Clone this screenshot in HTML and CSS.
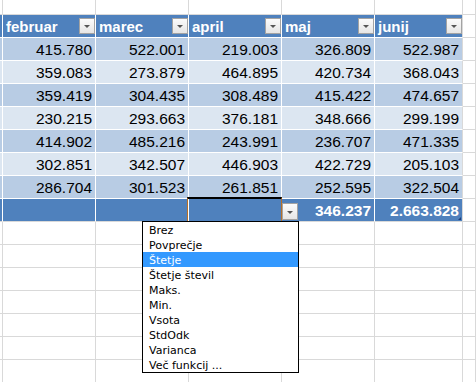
FILE: index.html
```html
<!DOCTYPE html>
<html lang="sl">
<head>
  <meta charset="UTF-8">
  <title>Tabela</title>
  <link rel="stylesheet" href="styles.css">
</head>
<body>
  <div class="sheet">
    <div class="row top">
      <div class="cell c0"></div><div class="cell c1"></div><div class="cell c2"></div><div class="cell c3"></div><div class="cell c4"></div><div class="cell c5"></div><div class="cell c6"></div>
    </div>

    <div class="row head">
      <div class="cell c0"></div>
      <div class="cell c1">februar<span class="dd"></span></div>
      <div class="cell c2">marec<span class="dd"></span></div>
      <div class="cell c3">april<span class="dd"></span></div>
      <div class="cell c4">maj<span class="dd"></span></div>
      <div class="cell c5">junij<span class="dd"></span></div>
      <div class="cell c6"></div>
    </div>

    <div class="row band dark">
      <div class="cell c0"></div><div class="cell c1">415.780</div><div class="cell c2">522.001</div><div class="cell c3">219.003</div><div class="cell c4">326.809</div><div class="cell c5">522.987</div><div class="cell c6"></div>
    </div>
    <div class="row band light">
      <div class="cell c0"></div><div class="cell c1">359.083</div><div class="cell c2">273.879</div><div class="cell c3">464.895</div><div class="cell c4">420.734</div><div class="cell c5">368.043</div><div class="cell c6"></div>
    </div>
    <div class="row band dark">
      <div class="cell c0"></div><div class="cell c1">359.419</div><div class="cell c2">304.435</div><div class="cell c3">308.489</div><div class="cell c4">415.422</div><div class="cell c5">474.657</div><div class="cell c6"></div>
    </div>
    <div class="row band light">
      <div class="cell c0"></div><div class="cell c1">230.215</div><div class="cell c2">293.663</div><div class="cell c3">376.181</div><div class="cell c4">348.666</div><div class="cell c5">299.199</div><div class="cell c6"></div>
    </div>
    <div class="row band dark">
      <div class="cell c0"></div><div class="cell c1">414.902</div><div class="cell c2">485.216</div><div class="cell c3">243.991</div><div class="cell c4">236.707</div><div class="cell c5">471.335</div><div class="cell c6"></div>
    </div>
    <div class="row band light">
      <div class="cell c0"></div><div class="cell c1">302.851</div><div class="cell c2">342.507</div><div class="cell c3">446.903</div><div class="cell c4">422.729</div><div class="cell c5">205.103</div><div class="cell c6"></div>
    </div>
    <div class="row band dark">
      <div class="cell c0"></div><div class="cell c1">286.704</div><div class="cell c2">301.523</div><div class="cell c3">261.851</div><div class="cell c4">252.595</div><div class="cell c5">322.504</div><div class="cell c6"></div>
    </div>

    <div class="row total">
      <div class="cell c0"></div>
      <div class="cell c1"></div>
      <div class="cell c2"></div>
      <div class="cell c3 active"></div>
      <div class="cell c4"><span class="dd dd-total"></span>346.237</div>
      <div class="cell c5">2.663.828<span class="grip"></span></div>
      <div class="cell c6"></div>
    </div>

    <div class="row empty"><div class="cell c0"></div><div class="cell c1"></div><div class="cell c2"></div><div class="cell c3"></div><div class="cell c4"></div><div class="cell c5"></div><div class="cell c6"></div></div>
    <div class="row empty"><div class="cell c0"></div><div class="cell c1"></div><div class="cell c2"></div><div class="cell c3"></div><div class="cell c4"></div><div class="cell c5"></div><div class="cell c6"></div></div>
    <div class="row empty"><div class="cell c0"></div><div class="cell c1"></div><div class="cell c2"></div><div class="cell c3"></div><div class="cell c4"></div><div class="cell c5"></div><div class="cell c6"></div></div>
    <div class="row empty"><div class="cell c0"></div><div class="cell c1"></div><div class="cell c2"></div><div class="cell c3"></div><div class="cell c4"></div><div class="cell c5"></div><div class="cell c6"></div></div>
    <div class="row empty"><div class="cell c0"></div><div class="cell c1"></div><div class="cell c2"></div><div class="cell c3"></div><div class="cell c4"></div><div class="cell c5"></div><div class="cell c6"></div></div>
    <div class="row empty"><div class="cell c0"></div><div class="cell c1"></div><div class="cell c2"></div><div class="cell c3"></div><div class="cell c4"></div><div class="cell c5"></div><div class="cell c6"></div></div>
    <div class="row empty"><div class="cell c0"></div><div class="cell c1"></div><div class="cell c2"></div><div class="cell c3"></div><div class="cell c4"></div><div class="cell c5"></div><div class="cell c6"></div></div>

    <!-- total row function list -->
    <ul class="func-list">
      <li>Brez</li>
      <li>Povprečje</li>
      <li class="selected">Štetje</li>
      <li>Štetje števil</li>
      <li>Maks.</li>
      <li>Min.</li>
      <li>Vsota</li>
      <li>StdOdk</li>
      <li>Varianca</li>
      <li>Več funkcij ...</li>
    </ul>
  </div>
</body>
</html>
```

FILE: styles.css
```css
body {
  margin: 0;
  background: #fff;
  overflow: hidden;
}

.sheet {
  position: relative;
  width: 476px;
  height: 382px;
  overflow: hidden;
  font-family: "Liberation Sans", Arial, sans-serif;
  font-size: 15.5px;
  color: #000;
}

.row {
  display: flex;
  height: 23px;
}

.row.top {
  height: 15px;
}

.cell {
  position: relative;
  box-sizing: border-box;
  height: 100%;
  border-right: 1px solid #d9d9d9;
  border-bottom: 1px solid #d9d9d9;
  padding: 1px 3px 0 3px;
  line-height: 22px;
  white-space: nowrap;
  overflow: hidden;
}

.c0 { width: 3px; padding: 0; }
.c1, .c2, .c3, .c4 { width: 93px; }
.c5 { width: 88px; }
.c6 { flex: 1; }

/* table area */
.head .cell,
.band .cell,
.total .cell {
  border-right-color: #fff;
  border-bottom-color: #fff;
}

.head .cell {
  background: #4f81bd;
  color: #fff;
  font-weight: bold;
  font-size: 15px;
  overflow: visible;
}

.band .cell,
.total .cell {
  text-align: right;
}

.band.dark .cell { background: #b8cce4; }
.band.light .cell { background: #dce6f1; }

.total .cell {
  background: #4f81bd;
  color: #fff;
  font-weight: bold;
  overflow: visible;
  border-bottom-color: #d9d9d9;
}

.row .cell.c5 {
  border-right-color: #d9d9d9;
}

.row .cell.c6 {
  background: #fff;
  border-right-color: #d9d9d9;
  border-bottom-color: #d9d9d9;
}

/* filter buttons */
.dd {
  position: absolute;
  right: 0;
  top: 3px;
  width: 16px;
  height: 16px;
  box-sizing: border-box;
  border: 1px solid #a3a3a3;
  background: linear-gradient(#fbfbfb, #e6e6e6);
}

.dd::after {
  content: "";
  position: absolute;
  left: 4px;
  top: 6px;
  border-top: 3px solid #555;
  border-left: 3px solid transparent;
  border-right: 3px solid transparent;
}

.dd-total {
  left: 0;
  right: auto;
  top: 4px;
  height: 17px;
  z-index: 2;
}

.dd-total::after {
  top: 7px;
}

.grip {
  position: absolute;
  right: 1px;
  bottom: 1px;
  width: 0;
  height: 0;
  border-bottom: 3px solid #1f3f7a;
  border-left: 3px solid transparent;
}

/* active cell */
.active::before {
  content: "";
  position: absolute;
  left: -2px;
  top: -2px;
  right: -1px;
  bottom: -1px;
  border-top: 2px solid #000;
  border-left: 1px solid #b5702a;
  border-right: 1px solid #b5702a;
  border-bottom: 1px solid #b5702a;
}

/* dropdown list */
.func-list {
  position: absolute;
  left: 142px;
  top: 221px;
  width: 157px;
  height: 152px;
  box-sizing: border-box;
  margin: 0;
  padding: 0;
  list-style: none;
  background: #fff;
  border: 1px solid #000;
  font-family: "DejaVu Sans", Tahoma, sans-serif;
  font-size: 11px;
  z-index: 3;
}

.func-list li {
  height: 15px;
  line-height: 15px;
  padding: 1px 0 0 6px;
  box-sizing: border-box;
  color: #000;
}

.func-list li.selected {
  background: #3399ff;
  color: #fff;
}
```
